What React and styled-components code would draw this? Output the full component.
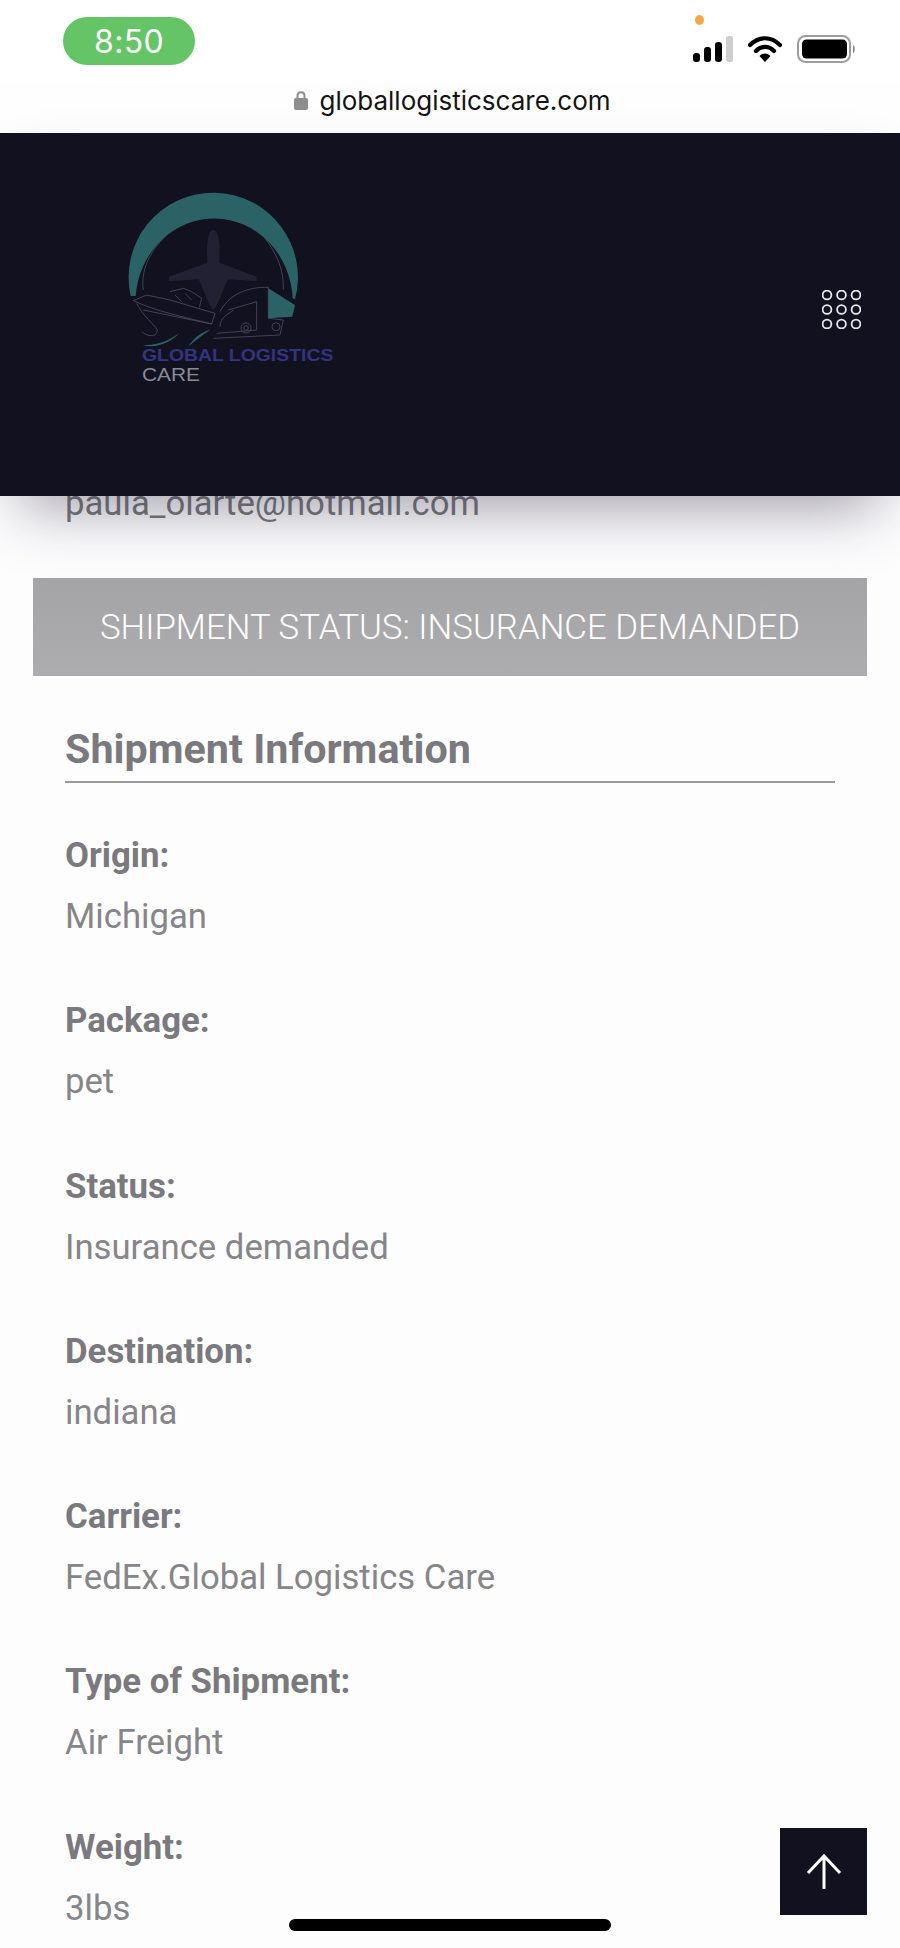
import React from "react";
import styled, { createGlobalStyle } from "styled-components";

const Global = createGlobalStyle`
  html, body { margin: 0; padding: 0; background: #fefdfe; }
  * { box-sizing: border-box; }
`;

const Page = styled.div`
  position: relative;
  width: 900px;
  height: 1948px;
  overflow: hidden;
  background: #fefdfe;
  font-family: Roboto, "Liberation Sans", sans-serif;
`;

const StatusBar = styled.div`
  display: flex;
  justify-content: space-between;
  align-items: flex-start;
  height: 82px;
  padding: 17px 43px 0 63px;
  background: #fff;
`;

const TimePill = styled.div`
  width: 132px;
  height: 48px;
  border-radius: 24px;
  background: #65c466;
  color: #fff;
  display: flex;
  align-items: center;
  justify-content: center;
  font-family: Inter, "Liberation Sans", sans-serif;
  font-size: 32px;
  letter-spacing: 0.3px;
`;

const Indicators = styled.div`
  position: relative;
  display: flex;
  align-items: center;
  gap: 15px;
  margin-top: 18px;
`;

const MicDot = styled.span`
  position: absolute;
  left: 2px;
  top: -20px;
  width: 9px;
  height: 10px;
  border-radius: 50%;
  background: #f5a54a;
`;

const UrlBar = styled.div`
  display: flex;
  align-items: center;
  justify-content: center;
  gap: 11px;
  height: 51px;
  padding: 0 0 15px 5px;
  background: #fefefe;
`;

const UrlText = styled.span`
  font-family: Inter, "Liberation Sans", sans-serif;
  font-size: 26px;
  color: #141414;
`;

const Header = styled.header`
  position: relative;
  z-index: 2;
  display: flex;
  justify-content: space-between;
  align-items: flex-start;
  height: 363px;
  padding: 37px 39px 0 100px;
  background: #12111f;
  box-shadow: 0 30px 60px -20px rgba(30, 28, 50, 0.44);
`;

const MenuIcon = styled.svg`
  width: 39px;
  height: 39px;
  margin-top: 120px;
`;

const Main = styled.main`
  padding: 0 33px;
  margin-top: -13px;
`;

const Email = styled.div`
  padding-left: 32px;
  font-size: 34.7px;
  line-height: 40px;
  color: #7a797e;
`;

const Banner = styled.div`
  margin-top: 55px;
  height: 98px;
  display: flex;
  align-items: center;
  justify-content: center;
  background: linear-gradient(#a4a3a6, #adacaf);
  color: #fff;
  font-size: 34.8px;
  font-weight: 300;
`;

const Section = styled.section`
  padding: 0 32px;
`;

const Heading = styled.h2`
  margin: 48px 0 42px;
  padding-bottom: 7px;
  border-bottom: 2px solid #9a99a0;
  font-size: 41.3px;
  line-height: 50px;
  font-weight: 700;
  color: #7a797e;
`;

const Fields = styled.div`
  display: flex;
  flex-direction: column;
  gap: 43.3px;
`;

const Label = styled.div`
  font-size: 34.8px;
  line-height: 61px;
  font-weight: 700;
  color: #7a797e;
`;

const Value = styled.div`
  font-size: 34.7px;
  line-height: 61px;
  color: #86858a;
`;

const TopButton = styled.div`
  position: absolute;
  left: 780px;
  top: 1828px;
  width: 87px;
  height: 87px;
  background: #12111f;
  display: flex;
  align-items: center;
  justify-content: center;
`;

const HomeBar = styled.div`
  position: absolute;
  left: 289px;
  top: 1919px;
  width: 322px;
  height: 12px;
  border-radius: 6px;
  background: #000;
`;

const Logo = () => (
  <svg width="270" height="230" viewBox="0 0 810 690">
    <path d="M92 378A254 254 0 1 1 585 388L578 385A236 252 0 0 0 107 378Z" fill="#2b6266" />
    <g fill="none" stroke="#4a4c62" strokeWidth="2.500">
      <path d="M226 172C160 225 120 290 130 360" />
      <path d="M495 205C530 250 552 300 550 358" />
      <path d="M100 392L140 375L210 390L345 430L335 462C250 440 170 425 100 392Z" />
      <path d="M130 420L335 462" />
      <path d="M210 365L250 355L275 365L305 385L298 412" />
      <path d="M225 375L245 395M255 370L275 390" />
      <path d="M110 400C130 440 160 460 172 480C172 498 150 505 125 485" />
      <path d="M360 425C385 375 440 350 505 352L505 445L550 450L540 495L340 505" />
      <path d="M385 420L470 395L470 480L350 490" />
      <path d="M360 470C360 440 390 430 400 420" />
      <circle cx="438" cy="474" r="15" />
      <circle cx="438" cy="474" r="7" />
      <circle cx="528" cy="470" r="12" />
    </g>
    <path
      d="M340 180C352 180 358 205 359 240L358 278L470 320L470 334L385 328C372 345 362 395 340 420C318 395 308 345 295 328L207 334L207 320L322 278L321 240C322 205 328 180 340 180Z"
      fill="#222133"
    />
    <path d="M505 355L585 405L577 440L505 445Z" fill="#2b6266" />
    <path
      d="M128 525C180 528 215 505 238 490C215 515 170 538 128 525ZM265 530C280 505 300 490 332 478C305 498 285 512 265 530Z"
      fill="#2b6266"
    />
    <text
      x="126"
      y="574"
      fontFamily="'Liberation Sans', sans-serif"
      fontWeight="700"
      fontSize="47"
      fill="#33347f"
      textLength="574"
      lengthAdjust="spacingAndGlyphs"
    >
      GLOBAL LOGISTICS
    </text>
    <text
      x="126"
      y="632"
      fontFamily="'Liberation Sans', sans-serif"
      fontSize="55"
      fill="#8a8a96"
      textLength="174"
      lengthAdjust="spacingAndGlyphs"
    >
      CARE
    </text>
  </svg>
);

const fields = [
  ["Origin:", "Michigan"],
  ["Package:", "pet"],
  ["Status:", "Insurance demanded"],
  ["Destination:", "indiana"],
  ["Carrier:", "FedEx.Global Logistics Care"],
  ["Type of Shipment:", "Air Freight"],
  ["Weight:", "3lbs"],
];

const dots = [5, 19.5, 34];

export default function App() {
  return (
    <Page>
      <Global />
      <StatusBar>
        <TimePill>8:50</TimePill>
        <Indicators>
          <MicDot />
          <svg width="40" height="26" viewBox="0 0 40 26">
            <rect x="0" y="17" width="7" height="9" rx="3" fill="#000" />
            <rect x="11" y="11" width="7" height="15" rx="3" fill="#000" />
            <rect x="22" y="6" width="7" height="20" rx="3" fill="#000" />
            <rect x="33" y="0" width="7" height="26" rx="2" fill="#cfcfcf" />
          </svg>
          <svg width="34" height="26" viewBox="0 0 34 26">
            <path d="M2 9C11 0 23 0 32 9" fill="none" stroke="#000" strokeWidth="4.2" strokeLinecap="round" />
            <path d="M8 15C13 9.500 21 9.500 26 15" fill="none" stroke="#000" strokeWidth="4.2" strokeLinecap="round" />
            <path d="M11.500 20C15 16.500 19 16.500 22.500 20L17 26Z" fill="#000" />
          </svg>
          <svg width="60" height="28" viewBox="0 0 60 28">
            <rect x="1" y="1" width="52" height="26" rx="7.500" fill="none" stroke="#9c9c9c" strokeWidth="2" />
            <rect x="5" y="4.500" width="45" height="19" rx="4.500" fill="#000" />
            <path d="M56 10C58.500 11 58.500 17 56 18Z" fill="#8a8a8a" />
          </svg>
        </Indicators>
      </StatusBar>
      <UrlBar>
        <svg width="14" height="20" viewBox="0 0 14 20">
          <path d="M3.500 9V5.500C3.500 1 10.500 1 10.500 5.500V9" fill="none" stroke="#8e8e8e" strokeWidth="2" />
          <rect x="0" y="8" width="14" height="12" rx="2" fill="#8e8e8e" />
        </svg>
        <UrlText>globallogisticscare.com</UrlText>
      </UrlBar>
      <Header>
        <Logo />
        <MenuIcon viewBox="0 0 39 39">
          {dots.map((y) =>
            dots.map((x) => (
              <circle key={`${x}-${y}`} cx={x} cy={y} r="4.400" fill="none" stroke="#e8e8ec" strokeWidth="1.800" />
            ))
          )}
        </MenuIcon>
      </Header>
      <Main>
        <Email>paula_olarte@hotmail.com</Email>
        <Banner>SHIPMENT STATUS: INSURANCE DEMANDED</Banner>
        <Section>
          <Heading>Shipment Information</Heading>
          <Fields>
            {fields.map(([label, value]) => (
              <div key={label}>
                <Label>{label}</Label>
                <Value>{value}</Value>
              </div>
            ))}
          </Fields>
        </Section>
      </Main>
      <TopButton>
        <svg width="38" height="38" viewBox="0 0 38 38">
          <path d="M19 3V36M3 20L19 3L35 20" fill="none" stroke="#fff" strokeWidth="3" />
        </svg>
      </TopButton>
      <HomeBar />
    </Page>
  );
}
